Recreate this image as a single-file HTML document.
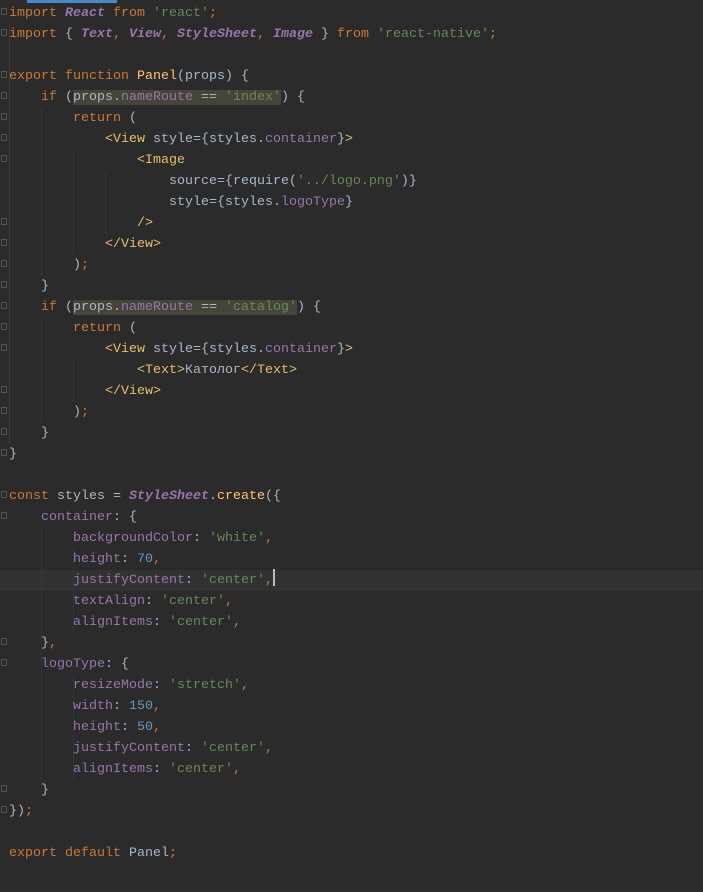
<!DOCTYPE html>
<html><head><meta charset="utf-8"><style>
html,body{margin:0;padding:0;background:#2b2b2b;width:703px;height:892px;overflow:hidden;position:relative}
.tab{position:absolute;left:27px;top:0;width:90px;height:3px;background:#4a88c7}
.code{position:absolute;left:9px;top:2.5px;font-family:"Liberation Mono","DejaVu Sans Mono",monospace;font-size:13.33px;line-height:21px;color:#a9b7c6}
.l{height:21px;position:relative;white-space:pre}
.cur{position:absolute;left:0;top:569.5px;width:703px;height:21px;background:#323232}
.k{color:#cc7832}.s{color:#6a8759}.p{color:#9876aa}.i{color:#9876aa;font-style:italic;font-weight:bold}.f{color:#ffc66d}.t{color:#e8bf6a}.n{color:#6897bb}
.h{background:#46453a}
.g{position:absolute;width:1px;background:#373737}
.fold{position:absolute;left:1px;width:6px;height:7px;border:1px solid #555;border-radius:1px;box-sizing:border-box}
.caret{display:inline-block;width:2px;height:17px;background:#bbb;vertical-align:middle;margin-top:-3px}
</style></head><body>
<div class="tab"></div>
<div class="cur"></div>
<div class="g" style="left:9px;top:24px;height:420px;background:#3a3a3a"></div>
<div class="g" style="left:41px;top:108px;height:168px"></div>
<div class="g" style="left:41px;top:318px;height:105px"></div>
<div class="g" style="left:73px;top:150px;height:105px"></div>
<div class="g" style="left:73px;top:360px;height:42px"></div>
<div class="g" style="left:105px;top:171px;height:63px"></div>
<div class="g" style="left:41px;top:528px;height:265px"></div>
<div class="g" style="left:73px;top:549px;height:84px"></div>
<div class="g" style="left:73px;top:675px;height:105px"></div>
<div class="code"><div class="l"><span class="k">import</span> <span class="i">React</span> <span class="k">from</span> <span class="s">'react'</span><span class="k">;</span></div><div class="l"><span class="k">import</span> { <span class="i">Text</span><span class="k">,</span> <span class="i">View</span><span class="k">,</span> <span class="i">StyleSheet</span><span class="k">,</span> <span class="i">Image</span> } <span class="k">from</span> <span class="s">'react-native'</span><span class="k">;</span></div><div class="l"> </div><div class="l"><span class="k">export function</span> <span class="f">Panel</span>(props) {</div><div class="l">    <span class="k">if</span> (<span class="h">props.<span class="p">nameRoute</span> == <span class="s">'index'</span></span>) {</div><div class="l">        <span class="k">return</span> (</div><div class="l">            <span class="t">&lt;View</span> style={styles.<span class="p">container</span>}<span class="t">&gt;</span></div><div class="l">                <span class="t">&lt;Image</span></div><div class="l">                    source={require(<span class="s">'../logo.png'</span>)}</div><div class="l">                    style={styles.<span class="p">logoType</span>}</div><div class="l">                <span class="t">/&gt;</span></div><div class="l">            <span class="t">&lt;/View&gt;</span></div><div class="l">        )<span class="k">;</span></div><div class="l">    }</div><div class="l">    <span class="k">if</span> (<span class="h">props.<span class="p">nameRoute</span> == <span class="s">'catalog'</span></span>) {</div><div class="l">        <span class="k">return</span> (</div><div class="l">            <span class="t">&lt;View</span> style={styles.<span class="p">container</span>}<span class="t">&gt;</span></div><div class="l">                <span class="t">&lt;Text&gt;</span>Католог<span class="t">&lt;/Text&gt;</span></div><div class="l">            <span class="t">&lt;/View&gt;</span></div><div class="l">        )<span class="k">;</span></div><div class="l">    }</div><div class="l">}</div><div class="l"> </div><div class="l"><span class="k">const</span> styles = <span class="i">StyleSheet</span>.<span class="f">create</span>({</div><div class="l">    <span class="p">container</span>: {</div><div class="l">        <span class="p">backgroundColor</span>: <span class="s">'white'</span><span class="k">,</span></div><div class="l">        <span class="p">height</span>: <span class="n">70</span><span class="k">,</span></div><div class="l">        <span class="p">justifyContent</span>: <span class="s">'center'</span><span class="k">,</span><span class="caret"></span></div><div class="l">        <span class="p">textAlign</span>: <span class="s">'center'</span><span class="k">,</span></div><div class="l">        <span class="p">alignItems</span>: <span class="s">'center'</span><span class="k">,</span></div><div class="l">    }<span class="k">,</span></div><div class="l">    <span class="p">logoType</span>: {</div><div class="l">        <span class="p">resizeMode</span>: <span class="s">'stretch'</span><span class="k">,</span></div><div class="l">        <span class="p">width</span>: <span class="n">150</span><span class="k">,</span></div><div class="l">        <span class="p">height</span>: <span class="n">50</span><span class="k">,</span></div><div class="l">        <span class="p">justifyContent</span>: <span class="s">'center'</span><span class="k">,</span></div><div class="l">        <span class="p">alignItems</span>: <span class="s">'center'</span><span class="k">,</span></div><div class="l">    }</div><div class="l">})<span class="k">;</span></div><div class="l"> </div><div class="l"><span class="k">export default</span> Panel<span class="k">;</span></div></div>
<div class="fold" style="top:8px"></div><div class="fold" style="top:29px"></div>
<div class="fold" style="top:71px"></div><div class="fold" style="top:92px"></div>
<div class="fold" style="top:113px"></div><div class="fold" style="top:134px"></div>
<div class="fold" style="top:155px"></div><div class="fold" style="top:218px"></div>
<div class="fold" style="top:239px"></div><div class="fold" style="top:260px"></div>
<div class="fold" style="top:281px"></div><div class="fold" style="top:302px"></div>
<div class="fold" style="top:323px"></div><div class="fold" style="top:344px"></div>
<div class="fold" style="top:386px"></div><div class="fold" style="top:407px"></div>
<div class="fold" style="top:428px"></div><div class="fold" style="top:449px"></div>
<div class="fold" style="top:491px"></div><div class="fold" style="top:512px"></div>
<div class="fold" style="top:638px"></div><div class="fold" style="top:659px"></div>
<div class="fold" style="top:785px"></div><div class="fold" style="top:806px"></div>
</body></html>
